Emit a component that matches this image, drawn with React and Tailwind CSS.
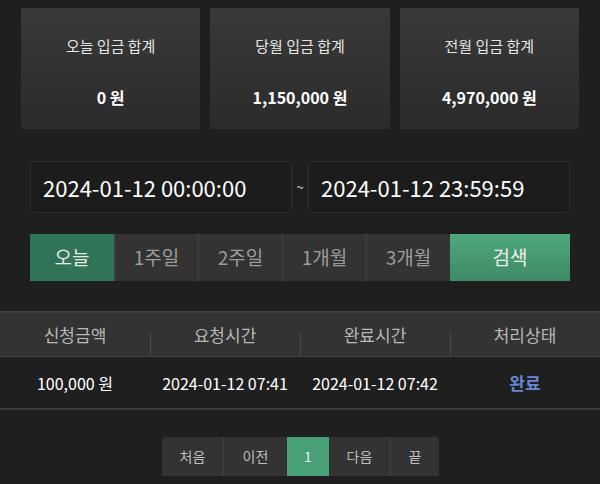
const ranges = ["오늘", "1주일", "2주일", "1개월", "3개월"];

const summary = [
  { label: "오늘 입금 합계", value: "0 원" },
  { label: "당월 입금 합계", value: "1,150,000 원" },
  { label: "전월 입금 합계", value: "4,970,000 원" },
];

const pages = ["처음", "이전", "1", "다음", "끝"];
const pageWidths = ["w-[61px]", "w-[64px]", "w-[42px]", "w-[61px]", "w-[49px]"];

export default function App() {
  return (
    <div
      className="w-[600px] h-[484px] bg-[#1f1f1f] text-white overflow-hidden"
      style={{ fontFamily: '"Noto Sans CJK KR", "Noto Sans", sans-serif' }}
    >
      {/* Summary cards */}
      <div className="grid grid-cols-3 gap-[10px] px-[21px] pt-[8px]">
        {summary.map((s, i) => (
          <div
            key={i}
            className="h-[121px] bg-gradient-to-b from-[#393939] to-[#2b2b2b] flex flex-col items-center"
          >
            <div className="mt-[27px] text-[15px] leading-[22px] text-[#e6e6e6]">{s.label}</div>
            <div className="mt-[28px] text-[16px] leading-[24px] font-bold text-white">{s.value}</div>
          </div>
        ))}
      </div>

      {/* Date range */}
      <div className="flex items-center px-[30px] mt-[32px]">
        <div className="w-[262px] h-[52px] rounded-[5px] border border-[#2f2f2f] bg-[#1c1c1c] flex items-center pl-[12px] text-[22px] text-white">
          2024-01-12 00:00:00
        </div>
        <div className="w-[16px] text-center text-[13px] text-[#cccccc]">~</div>
        <div className="flex-1 h-[52px] rounded-[5px] border border-[#2f2f2f] bg-[#1c1c1c] flex items-center pl-[12px] text-[22px] text-white">
          2024-01-12 23:59:59
        </div>
      </div>

      {/* Range buttons */}
      <div className="flex px-[30px] mt-[21px] h-[47px]">
        {ranges.map((r, i) => (
          <div
            key={i}
            className={`w-[84px] flex items-center justify-center text-[19px] ${
              i === 0
                ? "bg-[#2f7456] text-[#e8e8e8]"
                : "bg-[#333333] text-[#9c9c9c] border-l border-[#444444]"
            }`}
          >
            {r}
          </div>
        ))}
        <div className="flex-1 bg-gradient-to-b from-[#4fa97d] to-[#3d8a64] flex items-center justify-center text-[19px] text-[#f0f0f0]">
          검색
        </div>
      </div>

      {/* Table */}
      <div className="mt-[30px] border-t-2 border-[#3c3c3c]">
        <div className="grid grid-cols-4 h-[44px] bg-[#333333] border-b border-[#464646]">
          {["신청금액", "요청시간", "완료시간", "처리상태"].map((h, i) => (
            <div key={i} className="relative flex items-center justify-center text-[17px] text-[#b8b8b8]">
              {i > 0 && <span className="absolute left-0 top-[20px] bottom-0 w-px bg-[#4a4a4a]"></span>}
              {h}
            </div>
          ))}
        </div>
        <div className="grid grid-cols-4 h-[53px] bg-[#1f1f1f] border-b-2 border-[#3c3c3c] text-[16px] text-white">
          <div className="flex items-center justify-center">100,000 원</div>
          <div className="flex items-center justify-center">2024-01-12 07:41</div>
          <div className="flex items-center justify-center">2024-01-12 07:42</div>
          <div className="flex items-center justify-center text-[#6a86d6] text-[17px] font-bold">완료</div>
        </div>
      </div>

      {/* Pagination */}
      <div className="flex justify-center mt-[27px]">
        <div className="flex h-[39px] rounded-t-[4px] overflow-hidden ml-[1px]">
          {pages.map((p, i) => (
            <div
              key={i}
              className={`${pageWidths[i]} flex items-center justify-center text-[14px] ${
                p === "1"
                  ? "bg-[#48a077] text-[#eeeeee]"
                  : "bg-[#333333] text-[#bdbdbd]"
              } ${i > 0 && p !== "1" && pages[i - 1] !== "1" ? "border-l border-[#444444]" : ""}`}
            >
              {p}
            </div>
          ))}
        </div>
      </div>
    </div>
  );
}
